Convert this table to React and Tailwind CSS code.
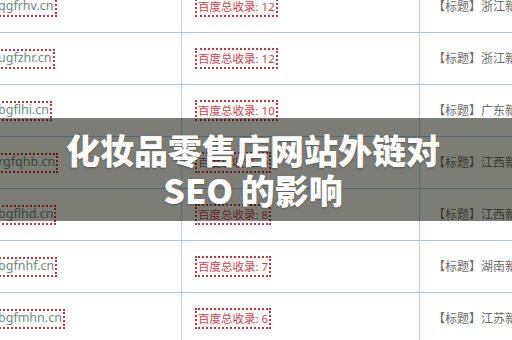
import React from 'react';

const rows = [
  { domain: 'qgfrhv.cn', count: 12, title: '浙江新闻网站推广' },
  { domain: 'ugfzhr.cn', count: 12, title: '浙江新闻网站推广' },
  { domain: 'bgflhi.cn', count: 10, title: '广东新闻网站推广' },
  { domain: 'rgfqhb.cn', count: 9, title: '江西新闻网站推广' },
  { domain: 'bgflhd.cn', count: 8, title: '江西新闻网站推广' },
  { domain: 'bgfnhf.cn', count: 7, title: '湖南新闻网站推广' },
  { domain: 'bgfmhn.cn', count: 6, title: '江苏新闻网站推广' },
];

export default function App() {
  return (
    <div
      className="relative w-[512px] h-[340px] overflow-hidden bg-white"
      style={{ fontFamily: '"Noto Sans", "Noto Sans CJK SC", sans-serif' }}
    >
      {/* table */}
      <div className="-mt-[19px] flex flex-col">
        {rows.map((r) => (
          <div key={r.domain} className="flex h-[52px] border-b border-[#aac7e8]">
            <div className="w-[182px] shrink-0 border-r border-[#b9d1ee] flex items-center overflow-hidden">
              <span className="-ml-[6px] pl-[2px] pr-[1px] h-[20px] flex items-center border-2 border-dotted border-[#c8303f] text-[12.5px] text-[#71887f] whitespace-nowrap">
                {r.domain}
              </span>
            </div>
            <div className="w-[238px] shrink-0 border-r border-[#b9d1ee] flex items-center pl-[13px]">
              <span className="px-px h-[21px] flex items-center border-2 border-dotted border-[#c8303f] text-[11.5px] text-[#d4404c] whitespace-nowrap">
                百度总收录: {r.count}
              </span>
            </div>
            <div className="flex-1 flex items-center pl-[13px] overflow-hidden">
              <span className="text-[12px] text-[#6b6b6b] whitespace-nowrap">【标题】{r.title}</span>
            </div>
          </div>
        ))}
      </div>

      {/* title overlay */}
      <div className="absolute left-0 right-0 top-[118px] h-[103px] bg-[rgba(19,19,10,0.55)] flex items-center justify-center px-[60px]">
        <h1
          className="text-white text-[34px] leading-[40px] font-black text-center -ml-[6px] [text-shadow:0_1px_2px_rgba(0,0,0,0.3)]"
          style={{ fontFamily: '"Noto Sans CJK SC", "Noto Sans", sans-serif' }}
        >
          化妆品零售店网站外链对 SEO 的影响
        </h1>
      </div>
    </div>
  );
}
